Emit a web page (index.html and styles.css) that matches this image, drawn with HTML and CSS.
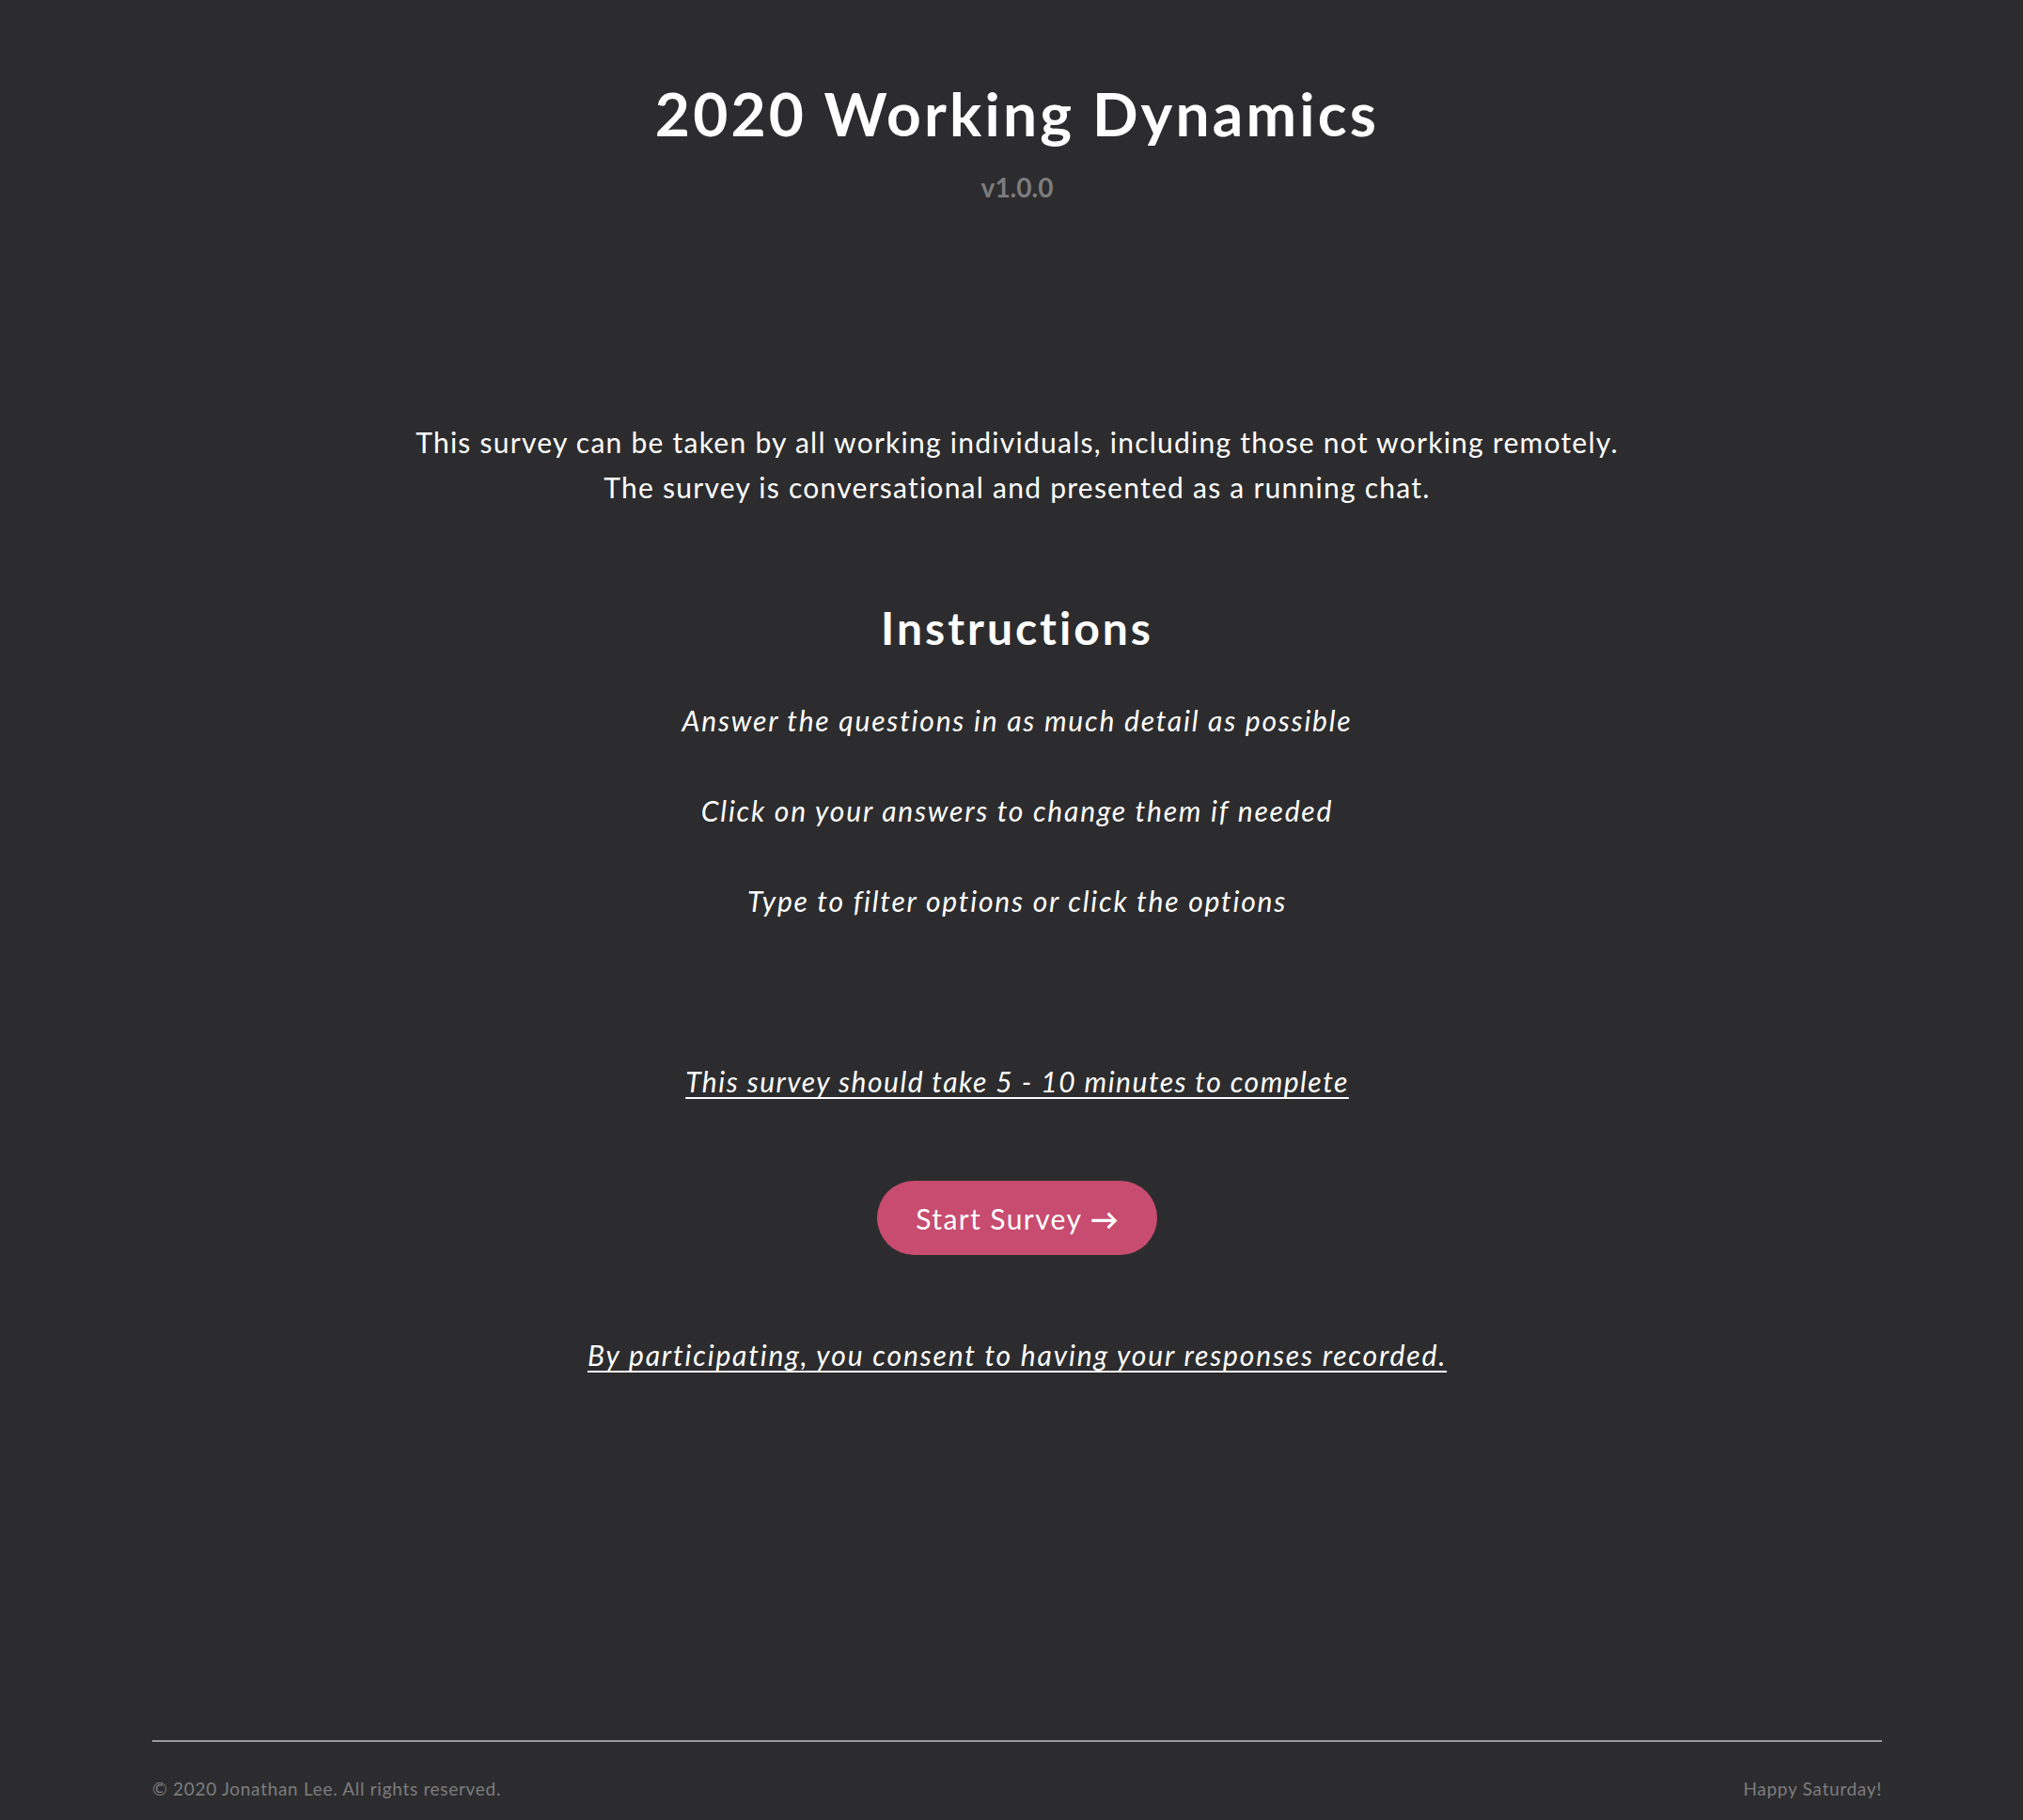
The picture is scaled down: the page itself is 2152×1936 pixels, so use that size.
FILE: index.html
```html
<!DOCTYPE html>
<html lang="en">
<head>
<meta charset="utf-8">
<title>2020 Working Dynamics</title>
<link rel="stylesheet" href="styles.css">
</head>
<body>
<div class="page">
  <header class="header">
    <h1 class="title">2020 Working Dynamics</h1>
    <div class="version">v1.0.0</div>
  </header>
  <main class="main">
    <p class="intro">This survey can be taken by all working individuals, including those not working remotely.<br>The survey is conversational and presented as a running chat.</p>
    <h2 class="heading">Instructions</h2>
    <ul class="steps">
      <li>Answer the questions in as much detail as possible</li>
      <li>Click on your answers to change them if needed</li>
      <li>Type to filter options or click the options</li>
    </ul>
    <p class="note">This survey should take 5 - 10 minutes to complete</p>
    <button class="start">Start Survey <span class="arrow">&#x2192;</span></button>
    <p class="consent">By participating, you consent to having your responses recorded.</p>
  </main>
  <footer class="footer">
    <span>&copy; 2020 Jonathan Lee. All rights reserved.</span>
    <span>Happy Saturday!</span>
  </footer>
</div>
</body>
</html>
```

FILE: styles.css
```css
* { box-sizing: border-box; }
html, body { margin: 0; padding: 0; }
body {
  background: #2c2c2e;
  color: #ffffff;
  font-family: "Lato", "Noto Sans", sans-serif;
}
.page {
  min-height: 1936px;
  display: flex;
  flex-direction: column;
  padding: 0 150px 0 162px;
}
.header {
  text-align: center;
  padding-top: 76px;
}
.title {
  margin: 0;
  font-size: 64px;
  font-weight: 700;
  line-height: 90px;
  letter-spacing: 3.2px;
}
.version {
  margin-top: 15px;
  font-size: 28px;
  font-weight: 700;
  color: #7c7c7e;
  line-height: 36px;
}
.main {
  flex: 1;
  display: flex;
  flex-direction: column;
  align-items: center;
  text-align: center;
  padding-top: 229px;
}
.intro {
  margin: 0;
  font-size: 30px;
  line-height: 48px;
  letter-spacing: 1.25px;
}
.heading {
  margin: 96px 0 0;
  font-size: 48px;
  font-weight: 700;
  line-height: 60px;
  letter-spacing: 3px;
}
.steps {
  list-style: none;
  margin: 44px 0 0;
  padding: 0;
  display: flex;
  flex-direction: column;
  gap: 48px;
}
.steps li {
  font-size: 30px;
  font-style: italic;
  line-height: 48px;
  letter-spacing: 1.8px;
}
.note {
  margin: 144px 0 0;
  font-size: 30px;
  font-style: italic;
  line-height: 48px;
  letter-spacing: 1.5px;
  text-decoration: underline;
  text-underline-offset: 5px;
  text-decoration-thickness: 2px;
}
.start {
  margin-top: 82px;
  width: 298px;
  height: 79px;
  border: 0;
  border-radius: 40px;
  background: #c74c6f;
  color: #fff;
  font-family: inherit;
  font-size: 30px;
  font-weight: 400;
  letter-spacing: 1.4px;
  cursor: pointer;
}
.arrow { font-weight: 700; letter-spacing: 0; }
.consent {
  margin: 82px 0 0;
  font-size: 30px;
  font-style: italic;
  line-height: 48px;
  letter-spacing: 1.85px;
  text-decoration: underline;
  text-underline-offset: 5px;
  text-decoration-thickness: 2px;
}
.footer {
  border-top: 2px solid #9a9a9c;
  display: flex;
  justify-content: space-between;
  align-items: center;
  height: 85px;
  padding-top: 15px;
  font-size: 19px;
  letter-spacing: 0.7px;
  color: #7c7c7e;
}
```
